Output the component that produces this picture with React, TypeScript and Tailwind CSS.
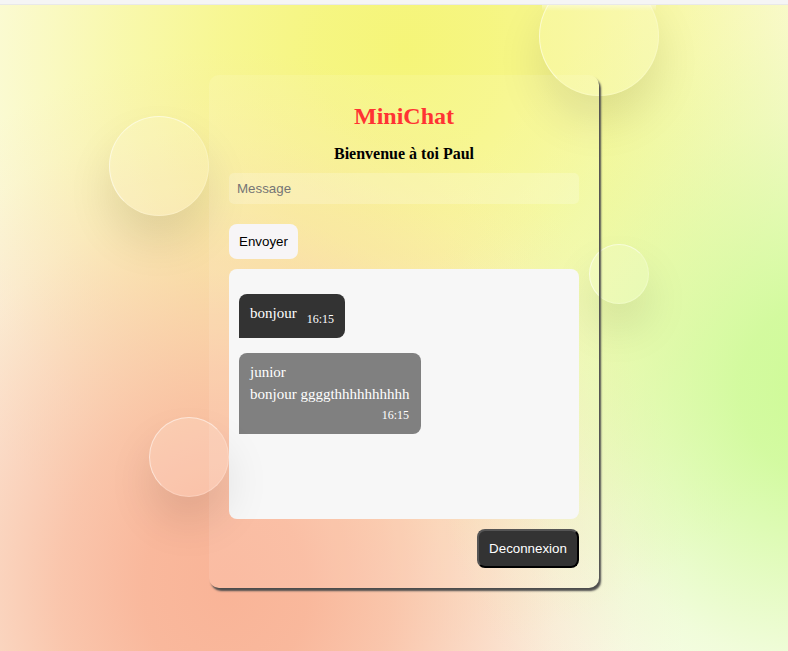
import React from "react";

const circle =
  "absolute rounded-full border border-white/50 border-r-white/20 border-b-white/20 bg-white/15 shadow-[0_25px_45px_rgba(0,0,0,0.1)] pointer-events-none";

function Message({ author, text, time }: { author?: string; text: string; time: string }) {
  if (!author) {
    return (
      <div className="flex h-[44px] w-[106px] justify-between rounded-lg rounded-bl-none bg-[#333] px-[11px] text-[15px] text-white">
        <span className="pt-2 leading-[22px]">{text}</span>
        <span className="pt-[15px] text-[12px] leading-[20px]">{time}</span>
      </div>
    );
  }
  return (
    <div className="mt-[15px] h-[81px] w-[182px] rounded-lg rounded-bl-none bg-[#808080] pt-2 pr-[12px] pl-[11px] text-[15px] leading-[22px] text-white">
      <p>{author}</p>
      <p className="whitespace-nowrap">{text}</p>
      <p className="text-right text-[12px] leading-[20px]">{time}</p>
    </div>
  );
}

export default function App() {
  return (
    <div className="flex h-[651px] w-[788px] flex-col overflow-hidden font-['Liberation_Serif',serif]">
      <div className="h-[5px] shrink-0 border-b border-[#e9e9e9] bg-[#f5f5f5]" />
      <main className="relative isolate flex-1 overflow-hidden bg-[#fcfdf0]">
        <div className="absolute inset-0 -z-10 bg-[radial-gradient(ellipse_400px_430px_at_820px_385px,rgba(204,250,148,0.97)_0%,rgba(204,250,148,0.85)_20%,rgba(206,250,150,0.56)_42%,rgba(208,250,156,0.26)_64%,rgba(210,250,165,0.08)_84%,rgba(210,250,165,0)_100%),radial-gradient(ellipse_460px_540px_at_225px_585px,rgba(249,178,149,0.97)_0%,rgba(249,179,150,0.93)_18%,rgba(249,182,153,0.78)_36%,rgba(249,186,158,0.54)_54%,rgba(250,192,165,0.28)_72%,rgba(251,200,175,0.09)_88%,rgba(251,205,180,0)_100%),radial-gradient(ellipse_540px_600px_at_405px_45px,rgba(245,245,118,0.98)_0%,rgba(245,245,120,0.92)_16%,rgba(246,245,122,0.79)_34%,rgba(246,245,126,0.6)_52%,rgba(247,243,130,0.36)_70%,rgba(247,243,134,0.13)_86%,rgba(248,243,140,0)_100%)]" />
        <div className={`${circle} top-[-29px] left-[539px] size-[120px]`} />
        <div className={`${circle} top-[111px] left-[109px] size-[100px]`} />
        <div className={`${circle} top-[239px] left-[589px] size-[60px]`} />
        <div className="absolute top-0 left-[542px] h-[6px] w-[114px] bg-linear-to-b from-white/40 to-transparent" />

        <section className="relative mt-[70px] ml-[209px] flex h-[513px] w-[390px] flex-col rounded-[10px] bg-white/10 px-5 pt-[27px] shadow-[2px_3px_2px_#4d4d4d]">
          <h1 className="text-center text-[24px] leading-[28px] font-bold text-[#ff3333]">MiniChat</h1>
          <h2 className="mt-[14px] text-center text-[16px] leading-[20px] font-bold text-black">Bienvenue à toi Paul</h2>
          <input
            placeholder="Message"
            className="mt-[9px] h-[31px] w-full shrink-0 rounded-[5px] bg-white/20 px-2 font-['Liberation_Sans',sans-serif] text-[13.333px] outline-none placeholder:text-[#757575]"
          />
          <button className="mt-5 h-[35px] w-[69px] shrink-0 rounded-lg bg-[#f7f5f7] font-['Liberation_Sans',sans-serif] text-[13.333px] text-black">
            Envoyer
          </button>
          <div className="mt-[10px] h-[250px] shrink-0 rounded-lg bg-[#f7f7f7] px-[10px] pt-[25px]">
            <Message text="bonjour" time="16:15" />
            <Message author="junior" text="bonjour ggggthhhhhhhhhh" time="16:15" />
          </div>
          <button className="mt-[10px] h-[39px] w-[102px] shrink-0 self-end rounded-lg border-2 border-t-[#555] border-r-black border-b-black border-l-[#555] bg-[#333] font-['Liberation_Sans',sans-serif] text-[13.333px] text-white">
            Deconnexion
          </button>
        </section>

        <div className={`${circle} top-[412px] left-[149px] size-[80px]`} />
      </main>
    </div>
  );
}
